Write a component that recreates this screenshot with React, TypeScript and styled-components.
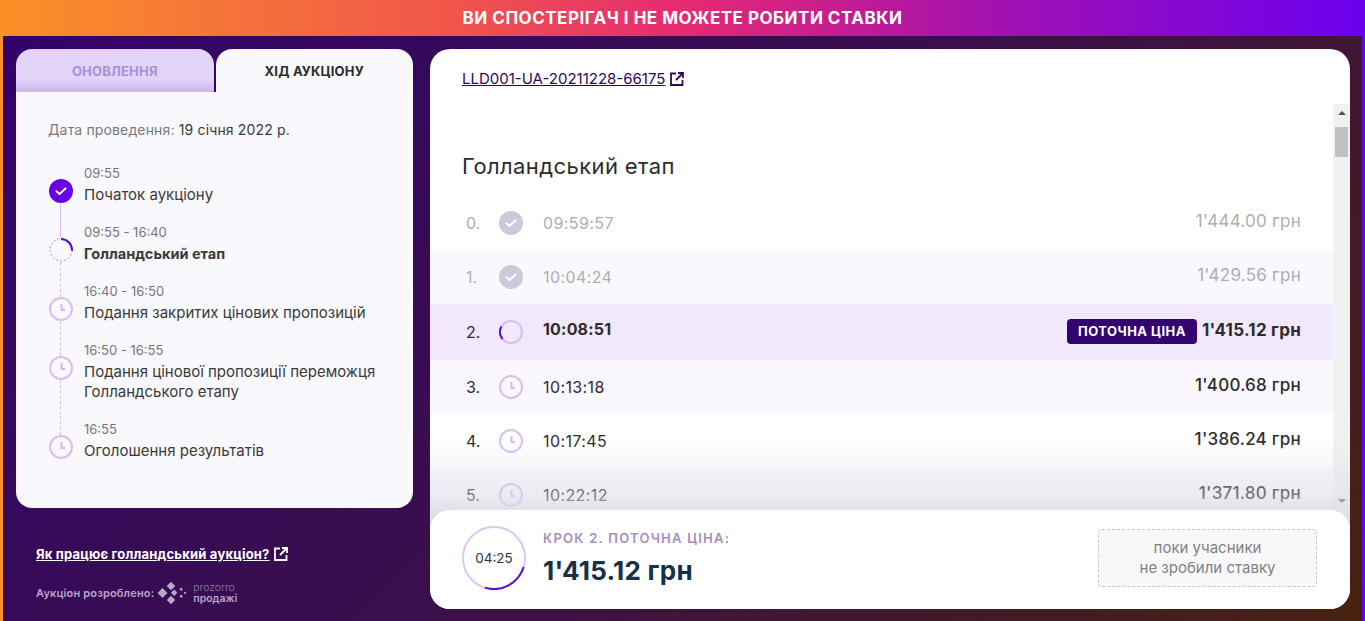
import React from 'react';
import styled, { createGlobalStyle } from 'styled-components';

const GlobalStyle = createGlobalStyle`
    html, body {
        margin: 0;
        padding: 0;
        overflow: hidden;
    }

    body {
        font-family: Inter, "Noto Sans", sans-serif;
        color: #2c2c2c;
    }

    * {
        box-sizing: border-box;
    }
`;

const Page = styled.div`
    width: 1365px;
    height: 621px;
    display: flex;
    flex-direction: column;
    background: linear-gradient(90deg, #fb9128 0%, #f0564b 33%, #e52a72 50%, #a512ae 72%, #6a00ee 100%);
`;

const Banner = styled.header`
    height: 36px;
    flex-shrink: 0;
    display: flex;
    align-items: center;
    justify-content: center;
    color: #fff;
    font-size: 17px;
    font-weight: 700;
    letter-spacing: 0.5px;
`;

const Frame = styled.main`
    flex: 1;
    min-height: 0;
    margin: 0 3px;
    padding: 13px 12px 12px 13px;
    display: flex;
    gap: 17px;
    background: linear-gradient(135deg, #33036a 0%, #3a0f4c 50%, #47220f 100%);
`;

const LeftColumn = styled.aside`
    width: 397px;
    flex-shrink: 0;
    display: flex;
    flex-direction: column;
`;

const Tabs = styled.nav`
    height: 43px;
    display: flex;
    gap: 2px;
`;

const Tab = styled.div<{ $active?: boolean }>`
    flex: 1;
    display: flex;
    align-items: center;
    justify-content: center;
    border-radius: 16px 16px 0 0;
    font-size: 13px;
    font-weight: 700;
    letter-spacing: 0.2px;
    color: ${({ $active }) => ($active ? '#2c2c2c' : '#a98fd6')};
    background: ${({ $active }) =>
        $active ? '#f9f8fc' : 'linear-gradient(180deg, #e3d3f9 0%, #e3d3f9 70%, #cdb9e8 100%)'};
`;

const Schedule = styled.section`
    height: 416px;
    padding: 28px 32px 0;
    border-radius: 0 0 16px 16px;
    background: #f9f8fc;
`;

const DateLine = styled.div`
    font-size: 14px;
    line-height: 20px;
    letter-spacing: 0.15px;
    color: #7a7a7a;
    margin-bottom: 23px;

    b {
        font-weight: 400;
        color: #3a3a3a;
    }
`;

const Steps = styled.ol`
    list-style: none;
    margin: 0;
    padding: 0;
`;

const Step = styled.li`
    display: flex;
    gap: 11px;
    padding-bottom: 17px;
`;

const StepMarker = styled.div<{ $line?: 'solid' | 'dashed' }>`
    position: relative;
    width: 25px;
    flex-shrink: 0;
    padding: 16px 0 0 1px;

    &::after {
        content: '';
        display: ${({ $line }) => ($line ? 'block' : 'none')};
        position: absolute;
        top: 40px;
        bottom: -33px;
        left: 12px;
        border-left: 1px ${({ $line }) => $line || 'solid'} #d5b9f8;
    }
`;

const StepTime = styled.div`
    font-size: 13px;
    line-height: 20px;
    color: #77757c;
`;

const StepTitle = styled.div<{ $bold?: boolean }>`
    font-size: ${({ $bold }) => ($bold ? '14.5px' : '15px')};
    line-height: 20px;
    margin-top: 2px;
    color: #3a3a3a;
    font-weight: ${({ $bold }) => ($bold ? 700 : 400)};
`;

const Notes = styled.div`
    padding: 38px 0 0 20px;
`;

const HelpLink = styled.a`
    display: flex;
    align-items: center;
    gap: 4px;
    font-size: 13px;
    font-weight: 700;
    line-height: 16px;
    letter-spacing: 0.2px;
    color: #fff;

    span {
        text-decoration: underline;
    }
`;

const Credit = styled.div`
    margin-top: 20px;
    display: flex;
    align-items: center;
    gap: 3px;
    font-size: 11px;
    font-weight: 600;
    letter-spacing: 0.15px;
    color: #b9a6c9;
`;

const LogoText = styled.div`
    margin-left: 3px;
    font-size: 10.5px;
    line-height: 11px;
    letter-spacing: 0;

    i {
        display: block;
        font-style: normal;
        font-weight: 300;
        color: #8f7a9f;
    }
`;

const AuctionPanel = styled.section`
    width: 920px;
    flex-shrink: 0;
    display: flex;
    flex-direction: column;
    border-radius: 20px;
    background: #fff;
    overflow: hidden;
`;

const LotHeader = styled.div`
    height: 55px;
    flex-shrink: 0;
    padding: 19px 32px 0;
`;

const LotLink = styled.a`
    display: inline-flex;
    align-items: center;
    gap: 5px;
    font-size: 15px;
    line-height: 18px;
    color: #2c0a5c;

    span {
        text-decoration: underline;
    }
`;

const ScrollBody = styled.div`
    position: relative;
    flex: 1;
    min-height: 0;
    display: flex;
    overflow: hidden;

    &::after {
        content: '';
        position: absolute;
        left: 0;
        right: 0;
        bottom: 0;
        height: 90px;
        background: linear-gradient(180deg, rgba(218, 218, 226, 0) 0%, rgba(218, 218, 226, 0.42) 64%, rgba(218, 218, 226, 0.8) 82%, rgba(218, 218, 226, 0.95) 100%);
    }
`;

const List = styled.div`
    flex: 1;
    min-width: 0;
`;

const StageTitle = styled.h2`
    margin: 0;
    height: 92px;
    padding: 48px 0 0 32px;
    font-size: 22px;
    line-height: 28px;
    font-weight: 400;
    letter-spacing: 0.4px;
    color: #2c2c2c;
`;

const Row = styled.div<{ $status: RowStatus; $odd: boolean }>`
    display: flex;
    align-items: center;
    height: ${({ $status }) => ($status === 'current' ? 56 : 54)}px;
    padding: 0 32px 0 36px;
    color: ${({ $status }) => ($status === 'done' ? '#aeaeae' : '#2c2c2c')};
    background: ${({ $status, $odd }) =>
        $status === 'current' ? '#f1e8fc' : $odd ? '#faf8fe' : '#fff'};
`;

const RowIndex = styled.div`
    width: 33px;
    font-size: 16px;
`;

const RowTime = styled.div<{ $status: RowStatus }>`
    margin: ${({ $status }) => ($status === 'current' ? '-7px 0 0 20px' : '-1px 0 0 20px')};
    font-size: 16px;
    letter-spacing: ${({ $status }) => ($status === 'current' ? '0.2px' : '0.4px')};
    font-weight: ${({ $status }) => ($status === 'current' ? 700 : 400)};
`;

const CurrentBadge = styled.div`
    margin: -2px 0 0 auto;
    width: 130px;
    height: 25px;
    display: flex;
    align-items: center;
    justify-content: center;
    border-radius: 4px;
    background: #33036f;
    color: #fff;
    font-size: 13px;
    font-weight: 700;
    letter-spacing: 0.45px;
`;

const RowPrice = styled.div<{ $status: RowStatus }>`
    margin: ${({ $status }) => ($status === 'current' ? '-4px 0 0 5px' : '-4px 0 0 auto')};
    font-size: 17px;
    letter-spacing: 0.25px;
    font-weight: ${({ $status }) => ($status === 'done' ? 400 : $status === 'current' ? 700 : 500)};
`;

const ScrollTrack = styled.div`
    width: 17px;
    flex-shrink: 0;
    height: 405px;
    display: flex;
    flex-direction: column;
    align-items: center;
    background: #f1f1f1;
`;

const ScrollArrow = styled.div<{ $down?: boolean }>`
    height: 17px;
    flex-shrink: 0;
    display: flex;
    align-items: center;
    justify-content: center;

    &::before {
        content: '';
        border-left: 4px solid transparent;
        border-right: 4px solid transparent;
        ${({ $down }) => ($down ? 'border-top' : 'border-bottom')}: 4px solid #505050;
    }
`;

const ScrollThumb = styled.div`
    width: 13px;
    height: 30px;
    margin-top: 6px;
    background: #c1c1c1;
`;

const ScrollSpacer = styled.div`
    flex: 1;
`;

const Summary = styled.footer`
    position: relative;
    z-index: 1;
    height: 99px;
    margin-top: -17px;
    flex-shrink: 0;
    display: flex;
    align-items: center;
    padding: 0 33px 4px 32px;
    border-radius: 20px 20px 0 0;
    background: #fff;
`;

const Timer = styled.div`
    position: relative;
    width: 64px;
    height: 64px;
    flex-shrink: 0;
    display: flex;
    align-items: center;
    justify-content: center;
    font-size: 13.5px;
    color: #333;

    svg {
        position: absolute;
        inset: 0;
    }
`;

const SummaryText = styled.div`
    margin-left: 17px;
`;

const StepLabel = styled.div`
    font-size: 13px;
    line-height: 18px;
    font-weight: 600;
    letter-spacing: 1.25px;
    color: #a78cc0;
`;

const SummaryPrice = styled.div`
    margin-top: 9px;
    font-size: 26px;
    line-height: 30px;
    font-weight: 700;
    letter-spacing: 0.25px;
    color: #14304a;
`;

const BidNotice = styled.div`
    margin-left: auto;
    width: 219px;
    height: 58px;
    display: flex;
    align-items: center;
    justify-content: center;
    text-align: center;
    border: 1px dashed #c4c8cc;
    border-radius: 4px;
    background: #f8f8fb;
    font-size: 15px;
    line-height: 20px;
    color: #808080;
`;

type RowStatus = 'done' | 'current' | 'next';

const rows: { time: string; price: string; status: RowStatus }[] = [
    { time: '09:59:57', price: "1'444.00 грн", status: 'done' },
    { time: '10:04:24', price: "1'429.56 грн", status: 'done' },
    { time: '10:08:51', price: "1'415.12 грн", status: 'current' },
    { time: '10:13:18', price: "1'400.68 грн", status: 'next' },
    { time: '10:17:45', price: "1'386.24 грн", status: 'next' },
    { time: '10:22:12', price: "1'371.80 грн", status: 'next' },
];

const steps: { time: string; title: React.ReactNode; icon: 'check' | 'stage' | 'clock'; line?: 'solid' | 'dashed'; bold?: boolean }[] = [
    { time: '09:55', title: 'Початок аукціону', icon: 'check', line: 'solid' },
    { time: '09:55 - 16:40', title: 'Голландський етап', icon: 'stage', line: 'dashed', bold: true },
    { time: '16:40 - 16:50', title: 'Подання закритих цінових пропозицій', icon: 'clock', line: 'dashed' },
    {
        time: '16:50 - 16:55',
        title: (
            <>
                Подання цінової пропозиції переможця
                <br />
                Голландського етапу
            </>
        ),
        icon: 'clock',
        line: 'dashed',
    },
    { time: '16:55', title: 'Оголошення результатів', icon: 'clock' },
];

const CheckIcon: React.FC<{ color: string }> = ({ color }) => (
    <svg width="24" height="24" viewBox="0 0 24 24" style={{ display: 'block' }}>
        <circle cx="12" cy="12" r="12" fill={color} />
        <path d="M7.5 12.2l3 2.8 6-5.6" fill="none" stroke="#fff" strokeWidth="2" strokeLinecap="round" strokeLinejoin="round" />
    </svg>
);

const ClockIcon: React.FC = () => (
    <svg width="24" height="24" viewBox="0 0 24 24" style={{ display: 'block' }}>
        <circle cx="12" cy="12" r="11" fill="none" stroke="#d8bef9" strokeWidth="2" />
        <path d="M12.5 7v6h3.5" fill="none" stroke="#d3b8f5" strokeWidth="2" />
    </svg>
);

// arc goes clockwise, angles in degrees from 12 o'clock
const Ring: React.FC<{ size: number; base: string; dotted?: boolean; from: number; to: number }> = ({ size, base, dotted, from, to }) => {
    const r = size / 2 - 1;
    const c = size / 2;
    return (
        <svg width={size} height={size} viewBox={`0 0 ${size} ${size}`} style={{ display: 'block' }}>
            <circle cx={c} cy={c} r={r} fill="none" stroke={base} strokeWidth="2" strokeDasharray={dotted ? '2 2' : undefined} />
            <circle
                cx={c}
                cy={c}
                r={r}
                fill="none"
                stroke="#5a0fc8"
                strokeWidth="2"
                pathLength={360}
                strokeDasharray={`${to - from} 360`}
                transform={`rotate(${from - 90} ${c} ${c})`}
            />
        </svg>
    );
};

const ExternalIcon: React.FC<{ color: string }> = ({ color }) => (
    <svg width="14" height="14" viewBox="0 0 14 14" fill="none" stroke={color} strokeWidth="1.8">
        <path d="M6 1.5H1v11.5h11.5V8" />
        <path d="M8 1h5v5M13 1L6 8" />
    </svg>
);

const ProzorroMark: React.FC = () => (
    <svg width="30" height="22" viewBox="0 0 30 22" fill="#b9a6c9">
        <rect x="2" y="7.5" width="7" height="7" transform="rotate(45 5.5 11)" />
        <rect x="11" y="1" width="6" height="6" transform="rotate(45 14 4)" />
        <rect x="11" y="15" width="6" height="6" transform="rotate(45 14 18)" />
        <rect x="15" y="8.5" width="4.5" height="4.5" transform="rotate(45 17.2 10.7)" />
        <rect x="23" y="6" width="2.5" height="2.5" transform="rotate(45 24.2 7.2)" />
        <rect x="23" y="13" width="2.5" height="2.5" transform="rotate(45 24.2 14.2)" />
        <rect x="27" y="9.8" width="2" height="2" transform="rotate(45 28 10.8)" />
    </svg>
);

const App: React.FC = () => {
    return (
        <Page>
            <GlobalStyle />
            <Banner>ВИ СПОСТЕРІГАЧ І НЕ МОЖЕТЕ РОБИТИ СТАВКИ</Banner>
            <Frame>
                <LeftColumn>
                    <Tabs>
                        <Tab>ОНОВЛЕННЯ</Tab>
                        <Tab $active>ХІД АУКЦІОНУ</Tab>
                    </Tabs>
                    <Schedule>
                        <DateLine>
                            Дата проведення: <b>19 січня 2022 р.</b>
                        </DateLine>
                        <Steps>
                            {steps.map((step) => (
                                <Step key={step.time}>
                                    <StepMarker $line={step.line}>
                                        {step.icon === 'check' && <CheckIcon color="#6a00e4" />}
                                        {step.icon === 'stage' && <Ring size={24} base="#d9c2f7" dotted from={0} to={95} />}
                                        {step.icon === 'clock' && <ClockIcon />}
                                    </StepMarker>
                                    <div>
                                        <StepTime>{step.time}</StepTime>
                                        <StepTitle $bold={step.bold}>{step.title}</StepTitle>
                                    </div>
                                </Step>
                            ))}
                        </Steps>
                    </Schedule>
                    <Notes>
                        <HelpLink>
                            <span>Як працює голландський аукціон?</span>
                            <ExternalIcon color="#fff" />
                        </HelpLink>
                        <Credit>
                            Аукціон розроблено:
                            <ProzorroMark />
                            <LogoText>
                                <i>prozorro</i>
                                продажі
                            </LogoText>
                        </Credit>
                    </Notes>
                </LeftColumn>
                <AuctionPanel>
                    <LotHeader>
                        <LotLink>
                            <span>LLD001-UA-20211228-66175</span>
                            <ExternalIcon color="#2c0a5c" />
                        </LotLink>
                    </LotHeader>
                    <ScrollBody>
                        <List>
                            <StageTitle>Голландський етап</StageTitle>
                            {rows.map((row, i) => (
                                <Row key={row.time} $status={row.status} $odd={i % 2 === 1}>
                                    <RowIndex>{i}.</RowIndex>
                                    {row.status === 'done' && <CheckIcon color="#cfc8da" />}
                                    {row.status === 'current' && <Ring size={24} base="#d8bef9" from={230} to={300} />}
                                    {row.status === 'next' && <ClockIcon />}
                                    <RowTime $status={row.status}>{row.time}</RowTime>
                                    {row.status === 'current' && <CurrentBadge>ПОТОЧНА ЦІНА</CurrentBadge>}
                                    <RowPrice $status={row.status}>{row.price}</RowPrice>
                                </Row>
                            ))}
                        </List>
                        <ScrollTrack>
                            <ScrollArrow />
                            <ScrollThumb />
                            <ScrollSpacer />
                            <ScrollArrow $down />
                        </ScrollTrack>
                    </ScrollBody>
                    <Summary>
                        <Timer>
                            <Ring size={64} base="#dcc6f9" from={107} to={197} />
                            04:25
                        </Timer>
                        <SummaryText>
                            <StepLabel>КРОК 2. ПОТОЧНА ЦІНА:</StepLabel>
                            <SummaryPrice>1'415.12 грн</SummaryPrice>
                        </SummaryText>
                        <BidNotice>
                            поки учасники
                            <br />
                            не зробили ставку
                        </BidNotice>
                    </Summary>
                </AuctionPanel>
            </Frame>
        </Page>
    );
};

export default App;
